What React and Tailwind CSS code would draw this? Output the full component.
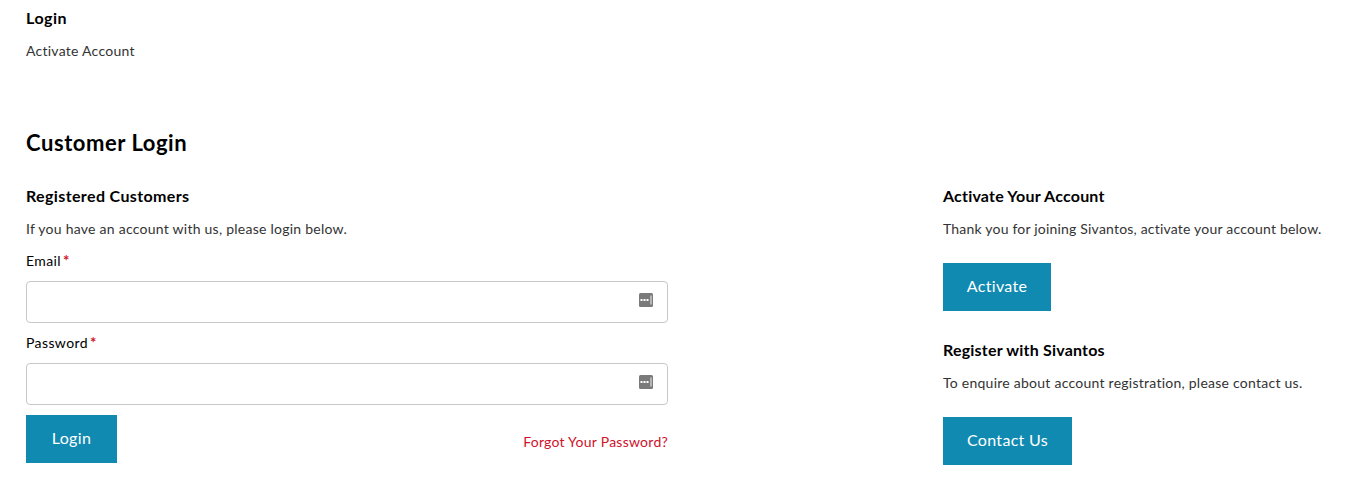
const font = "font-['Lato','Open_Sans',sans-serif]";

function PassIcon() {
  return (
    <svg width="14" height="14" viewBox="0 0 14 14" className="absolute right-[14px] top-[11px]">
      <rect x="0" y="0" width="14" height="14" rx="1.5" fill="#7a7a7a" />
      <rect x="1.5" y="6" width="2" height="2" fill="#fff" />
      <rect x="4.5" y="6" width="2" height="2" fill="#fff" />
      <rect x="7.5" y="6" width="2" height="2" fill="#fff" />
      <rect x="11.5" y="2.5" width="1" height="9" fill="#f2f2f2" />
    </svg>
  );
}

function Field({ label }) {
  return (
    <div>
      <div className="h-5 pb-[2px] flex items-center text-[14px] text-black tracking-[0.4px]">
        {label}
        <span className="text-[15px] font-bold text-[#d0112b] ml-[2px]">*</span>
      </div>
      <div className="relative mt-[10px] h-[42px] rounded-[4px] border border-[#c8c8c8] bg-white">
        <PassIcon />
      </div>
    </div>
  );
}

function Btn({ children, w }) {
  return <button className={`h-12 pb-[2px] ${w} bg-[#118ab2] text-white text-[16px] tracking-[0.3px]`}>{children}</button>;
}

const heading = "h-5 flex items-center text-[16px] font-bold tracking-[0.2px]";

export default function App() {
  return (
    <div className={`${font} min-h-[498px] bg-white pl-[26px] pr-[25px] pt-2 text-black`}>
      <div className="h-5 flex items-center text-[16px] font-bold tracking-[0.5px]">Login</div>
      <div className="mt-3 h-5 flex items-center text-[14px] tracking-[0.25px] text-[#333]">Activate Account</div>
      <h1 className="mt-[66px] h-8 flex items-center text-[22px] font-bold tracking-[0.55px]">Customer Login</h1>
      <div className="mt-7 flex justify-between">
        <div className="w-[642px]">
          <h2 className="h-5 flex items-center text-[16px] font-bold tracking-[0.37px]">Registered Customers</h2>
          <p className="mt-3 h-5 flex items-center text-[14px] tracking-[0.25px] text-[#333]">If you have an account with us, please login below.</p>
          <div className="mt-[13px] flex flex-col gap-[10px]">
            <Field label="Email" />
            <Field label="Password" />
          </div>
          <div className="mt-[10px] flex items-start justify-between">
            <Btn w="w-[91px]">Login</Btn>
            <a className="mt-4 h-5 flex items-center text-[14px] tracking-[0.25px] text-[#d0112b]">Forgot Your Password?</a>
          </div>
        </div>
        <div className="w-[379px]">
          <h2 className={heading}>Activate Your Account</h2>
          <p className="mt-3 h-5 flex items-center text-[14px] tracking-[0.2px] text-[#333] whitespace-nowrap">Thank you for joining Sivantos, activate your account below.</p>
          <div className="mt-[25px]"><Btn w="w-[108px]">Activate</Btn></div>
          <h2 className={`mt-[29px] ${heading}`}>Register with Sivantos</h2>
          <p className="mt-3 h-5 flex items-center text-[14px] tracking-[0.25px] text-[#333] whitespace-nowrap">To enquire about account registration, please contact us.</p>
          <div className="mt-[25px]"><Btn w="w-[129px]">Contact Us</Btn></div>
        </div>
      </div>
    </div>
  );
}
